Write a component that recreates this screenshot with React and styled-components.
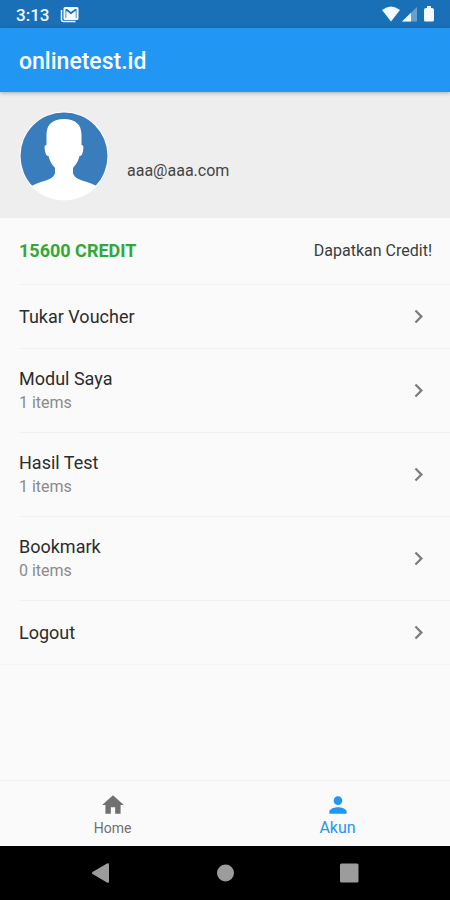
import React from "react";
import styled, { createGlobalStyle } from "styled-components";

const GlobalStyle = createGlobalStyle`
  *, *::before, *::after { box-sizing: border-box; }
  body { margin: 0; background: #fafafa; }
  button { font: inherit; color: inherit; border: 0; background: none; padding: 0; margin: 0; cursor: pointer; }
`;

const Screen = styled.div`
  display: flex;
  flex-direction: column;
  min-height: 100vh;
  background: #fafafa;
  color: #2c2c2c;
  font-family: Roboto, "Liberation Sans", sans-serif;
  font-size: 16px;
  line-height: 20px;
`;

const StatusBar = styled.div`
  display: flex;
  align-items: center;
  justify-content: space-between;
  height: 28px;
  padding: 2px 14px 0 16px;
  background: #1a70b7;
  color: #f4f9fd;
`;

const StatusGroup = styled.div`
  display: flex;
  align-items: center;
  gap: 11px;
`;

const Clock = styled.time`
  font-size: 17px;
  font-weight: 500;
`;

const AppBar = styled.header`
  display: flex;
  align-items: center;
  height: 64px;
  padding: 4px 19px 0;
  background: #2196f3;
  box-shadow: 0 1px 4px rgba(0, 0, 0, 0.3);
  z-index: 1;
`;

const Title = styled.h1`
  margin: 0;
  color: #fff;
  font-size: 23px;
  font-weight: 500;
  line-height: 28px;
`;

const Main = styled.main`
  flex: 1;
`;

const Profile = styled.section`
  display: flex;
  align-items: center;
  gap: 18px;
  height: 126px;
  padding: 2px 19px 0;
  background: #eee;
`;

const Email = styled.p`
  margin: 0;
  padding-top: 30px;
  color: #444;
`;

const CreditRow = styled.section`
  display: flex;
  align-items: center;
  justify-content: space-between;
  height: 67px;
  margin-left: 19px;
  padding-right: 18px;
  border-bottom: 1px solid #f3f3f3;
`;

const Credit = styled.strong`
  color: #33a838;
  font-size: 18px;
  font-weight: 700;
`;

const GetCredit = styled.button`
  && {
    color: #3c3c3c;
  }
`;

const Menu = styled.ul`
  list-style: none;
  margin: 0;
  padding: 0;
`;

const MenuItem = styled.li`
  margin-left: 19px;
  border-bottom: 1px solid #f0f0f0;

  &:last-child {
    margin-left: 0;
    padding-left: 19px;
    border-color: #f4f4f4;
  }
`;

const MenuButton = styled.button`
  display: flex;
  align-items: center;
  justify-content: space-between;
  width: 100%;
  height: ${(p) => (p.$tall ? 83 : 63)}px;
  && {
    padding-right: 18px;
    text-align: left;
  }
`;

const Label = styled.span`
  display: block;
  font-size: 18px;
  line-height: 24px;
`;

const Count = styled.span`
  display: block;
  color: #8a8a8a;
  font-size: 16px;
  line-height: 24px;
`;

const Tabs = styled.nav`
  display: grid;
  grid-template-columns: 1fr 1fr;
  height: 66px;
  border-top: 1px solid #f1f1f1;
`;

const Tab = styled.button`
  display: flex;
  flex-direction: column;
  align-items: center;
  justify-content: center;
  && {
    padding-top: 2px;
    color: ${(p) => (p.$active ? "#2196f3" : "#707070")};
    font-size: ${(p) => (p.$active ? 16 : 14)}px;
  }
`;

const SystemBar = styled.div`
  display: flex;
  align-items: center;
  justify-content: center;
  gap: 100px;
  height: 54px;
  background: #000;
  color: #9c9c9c;
`;

const SystemButton = styled.button`
  display: flex;
`;

const Icon = styled.svg`
  display: block;
  flex: none;
  fill: currentColor;
`;

const items = [
  { label: "Tukar Voucher" },
  { label: "Modul Saya", count: "1 items" },
  { label: "Hasil Test", count: "1 items" },
  { label: "Bookmark", count: "0 items" },
  { label: "Logout" },
];

function Avatar() {
  return (
    <Icon width="90" height="90" viewBox="0 0 90 90" role="img" aria-label="Foto profil">
      <circle cx="45" cy="45" r="44.5" fill="#fff" />
      <circle cx="45" cy="45" r="43.5" fill="#397dbd" />
      <path
        fill="#fff"
        d="M45 8C34 8 27.500 13 27.500 24V34C25 34 25.500 37 26 40C26.500 43 27.500 45 29.500 45C31 51 33.500 54 36 57V62C35 67 29 69 22 71C18 72 15 74 12.500 75A44.500 44.500 0 0 0 77.500 75C75 74 72 72 68 71C61 69 55 67 54 62V57C56.500 54 59 51 60.500 45C62.500 45 63.500 43 64 40C64.500 37 65 34 62.500 34V24C62.500 13 56 8 45 8Z"
      />
    </Icon>
  );
}

export default function App() {
  return (
    <Screen>
      <GlobalStyle />
      <StatusBar>
        <StatusGroup>
          <Clock>3:13</Clock>
          <Icon width="19" height="16" viewBox="0 0 19 16" aria-hidden="true">
            <path d="M1.500 3V12.500Q1.500 14.500 3.500 14.500H15.500" fill="none" stroke="currentColor" strokeWidth="1.500" />
            <path
              fillRule="evenodd"
              d="M5 0H17Q18.500 0 18.500 1.500V11.500Q18.500 13 17 13H5Q3.500 13 3.500 11.500V1.500Q3.500 0 5 0ZM5.500 2V11H6.500V4L11 7.500L15.500 4V11H16.500V2H15L11 5L7 2Z"
            />
            <path d="M6.500 4L11 7.500L15.500 4V11H6.500Z" />
          </Icon>
        </StatusGroup>
        <Icon width="54" height="18" viewBox="0 0 54 18" aria-hidden="true">
          <path d="M0 4Q9 -3 18 4L9 15.500Z" />
          <path d="M20 15.500L35 1V15.500Z" opacity="0.35" />
          <path d="M20 15.500L29 6.800V15.500Z" />
          <path d="M45 0H49V2H50Q52 2 52 4V14Q52 15.500 50.500 15.500H43.500Q42 15.500 42 14V4Q42 2 44 2H45Z" />
        </Icon>
      </StatusBar>
      <AppBar>
        <Title>onlinetest.id</Title>
      </AppBar>
      <Main>
        <Profile>
          <Avatar />
          <Email>aaa@aaa.com</Email>
        </Profile>
        <CreditRow>
          <Credit>15600 CREDIT</Credit>
          <GetCredit type="button">Dapatkan Credit!</GetCredit>
        </CreditRow>
        <Menu>
          {items.map((item) => (
            <MenuItem key={item.label}>
              <MenuButton type="button" $tall={Boolean(item.count)}>
                <span>
                  <Label>{item.label}</Label>
                  {item.count && <Count>{item.count}</Count>}
                </span>
                <Icon width="27" height="27" viewBox="0 0 24 24" color="#7c7c7c" aria-hidden="true">
                  <path d="M10 6L8.590 7.410 13.170 12l-4.580 4.590L10 18l6-6z" />
                </Icon>
              </MenuButton>
            </MenuItem>
          ))}
        </Menu>
      </Main>
      <Tabs>
        <Tab type="button">
          <Icon width="26" height="26" viewBox="0 0 24 24" aria-hidden="true">
            <path d="M10 20v-6h4v6h5v-8h3L12 3 2 12h3v8z" />
          </Icon>
          Home
        </Tab>
        <Tab type="button" $active aria-current="page">
          <Icon width="26" height="26" viewBox="0 0 24 24" aria-hidden="true">
            <path d="M12 12c2.210 0 4-1.790 4-4s-1.790-4-4-4-4 1.790-4 4 1.790 4 4 4zm0 2c-2.670 0-8 1.340-8 4v2h16v-2c0-2.660-5.330-4-8-4z" />
          </Icon>
          Akun
        </Tab>
      </Tabs>
      <SystemBar>
        <SystemButton type="button" aria-label="Kembali">
          <Icon width="24" height="24" viewBox="0 0 24 24">
            <path d="M20 3.500V20.500Q20 22.500 18 21.500L3.500 13Q2 12 3.500 11L18 2.500Q20 1.500 20 3.500Z" />
          </Icon>
        </SystemButton>
        <SystemButton type="button" aria-label="Beranda">
          <Icon width="24" height="24" viewBox="0 0 24 24">
            <circle cx="12.500" cy="12" r="8.500" />
          </Icon>
        </SystemButton>
        <SystemButton type="button" aria-label="Aplikasi terbaru">
          <Icon width="24" height="24" viewBox="0 0 24 24">
            <rect x="3" y="2.500" width="18.500" height="19" rx="1.500" />
          </Icon>
        </SystemButton>
      </SystemBar>
    </Screen>
  );
}
